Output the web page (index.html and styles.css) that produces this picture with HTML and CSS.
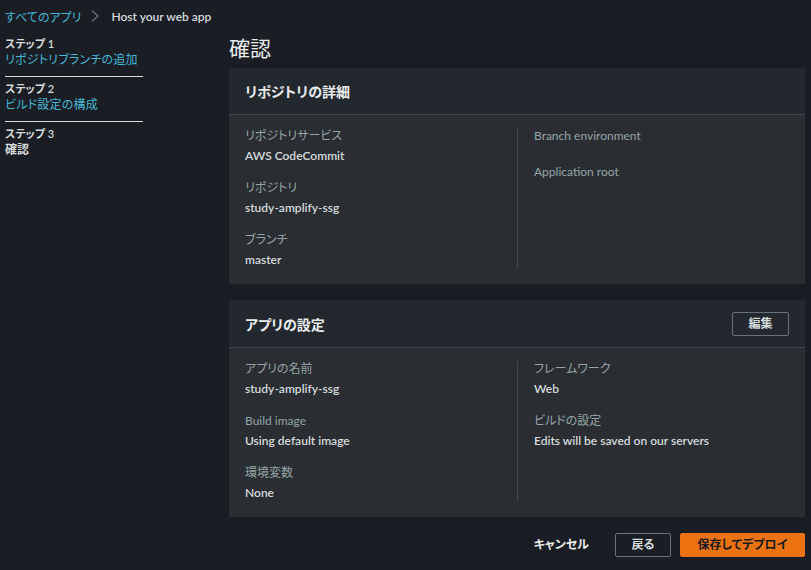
FILE: index.html
```html
<!DOCTYPE html>
<html lang="ja">
<head>
<meta charset="utf-8">
<title>確認</title>
<link rel="stylesheet" href="styles.css">
</head>
<body>
<nav class="breadcrumb">
  <a class="crumb-link" href="#">すべてのアプリ</a>
  <svg class="chev" width="10" height="14" viewBox="0 0 10 14"><path d="M2 1.5 L8 7 L2 12.5" fill="none" stroke="#687078" stroke-width="1.4"/></svg>
  <span class="crumb-current">Host your web app</span>
</nav>
<div class="layout">
  <aside class="steps">
    <div class="step">
      <div class="step-num">ステップ 1</div>
      <a class="step-link" href="#">リポジトリブランチの追加</a>
    </div>
    <div class="step">
      <div class="step-num">ステップ 2</div>
      <a class="step-link" href="#">ビルド設定の構成</a>
    </div>
    <div class="step step-last">
      <div class="step-num">ステップ 3</div>
      <div class="step-current">確認</div>
    </div>
  </aside>
  <main class="main">
    <h1 class="page-title">確認</h1>
    <section class="panel">
      <header class="panel-head">
        <h2 class="panel-title">リポジトリの詳細</h2>
      </header>
      <div class="panel-body">
        <div class="col">
          <div class="field"><div class="label">リポジトリサービス</div><div class="value">AWS CodeCommit</div></div>
          <div class="field"><div class="label">リポジトリ</div><div class="value">study-amplify-ssg</div></div>
          <div class="field"><div class="label">ブランチ</div><div class="value">master</div></div>
        </div>
        <div class="col col-right">
          <div class="field"><div class="label">Branch environment</div><div class="value"></div></div>
          <div class="field"><div class="label">Application root</div><div class="value"></div></div>
        </div>
      </div>
    </section>
    <section class="panel panel-settings">
      <header class="panel-head">
        <h2 class="panel-title">アプリの設定</h2>
        <button class="btn btn-normal btn-edit">編集</button>
      </header>
      <div class="panel-body">
        <div class="col">
          <div class="field"><div class="label">アプリの名前</div><div class="value">study-amplify-ssg</div></div>
          <div class="field"><div class="label">Build image</div><div class="value">Using default image</div></div>
          <div class="field"><div class="label">環境変数</div><div class="value">None</div></div>
        </div>
        <div class="col col-right">
          <div class="field"><div class="label">フレームワーク</div><div class="value">Web</div></div>
          <div class="field"><div class="label">ビルドの設定</div><div class="value">Edits will be saved on our servers</div></div>
        </div>
      </div>
    </section>
    <div class="actions">
      <button class="btn btn-link">キャンセル</button>
      <button class="btn btn-normal btn-back">戻る</button>
      <button class="btn btn-primary">保存してデプロイ</button>
    </div>
  </main>
</div>
</body>
</html>
```
FILE: styles.css
```css
* { box-sizing: border-box; }
html, body {
  margin: 0;
  padding: 0;
  background: #1a1d24;
  color: #d5dbdb;
  font-family: Lato, "Noto Sans CJK JP", sans-serif;
  font-feature-settings: "palt";
  font-size: 12px;
}
a { text-decoration: none; }

.breadcrumb {
  display: flex;
  align-items: center;
  height: 33px;
  padding-left: 5px;
  padding-bottom: 1px;
}
.crumb-link { color: #44b9d6; font-size: 12px; }
.chev { margin: 0 11px 0 9px; }
.crumb-current { color: #d5dbdb; font-weight: 600; font-size: 12px; }

.layout {
  display: flex;
  align-items: flex-start;
}
.steps {
  width: 138px;
  margin-left: 5px;
  margin-top: 3px;
}
.step {
  padding-bottom: 8px;
  border-bottom: 1px solid #d5dbdb;
  margin-bottom: 4px;
}
.step-last { border-bottom: none; }
.step-num {
  font-size: 11px;
  line-height: 16px;
  color: #d5dbdb;
  font-weight: 600;
}
.step-link {
  display: block;
  color: #44b9d6;
  font-size: 12px;
  line-height: 16px;
  white-space: nowrap;
  letter-spacing: 0.2px;
}
.step-current {
  font-size: 12px;
  line-height: 16px;
  font-weight: 700;
  color: #d5dbdb;
}

.main {
  width: 576px;
  margin-left: 86px;
}
.page-title {
  margin: 0;
  height: 35px;
  font-size: 21px;
  font-weight: 400;
  line-height: 30px;
  color: #eaeded;
}
.panel {
  background: #2a2e33;
  margin-bottom: 16px;
}
.panel-head {
  display: flex;
  align-items: center;
  justify-content: space-between;
  height: 47px;
  padding: 0 16px;
  background: #23272e;
  border-bottom: 1px solid #414750;
}
.panel-settings .panel-head { height: 48px; }
.panel-title {
  margin: 0;
  font-size: 14px;
  font-weight: 700;
  color: #eaeded;
}
.panel-body {
  display: grid;
  grid-template-columns: 1fr 1fr;
  padding: 13px 16px 16px;
}
.col {
  display: flex;
  flex-direction: column;
  gap: 16px;
}
.col-right {
  border-left: 1px solid #414750;
  padding-left: 16px;
}
.field {
  display: flex;
  flex-direction: column;
  gap: 4px;
}
.label {
  font-size: 12px;
  line-height: 16px;
  color: #95a5a6;
}
.value {
  font-size: 12px;
  line-height: 16px;
  font-weight: 600;
  color: #d5dbdb;
}

.btn {
  font-family: inherit;
  font-feature-settings: "palt";
  font-size: 12px;
  font-weight: 700;
  height: 24px;
  padding: 0;
  cursor: pointer;
  line-height: 22px;
}
.btn-normal {
  background: transparent;
  color: #d5dbdb;
  border: 1px solid #687078;
  border-radius: 2px;
}
.btn-edit { width: 57px; }
.btn-link {
  background: transparent;
  border: 1px solid transparent;
  color: #eaeded;
  padding: 0 20px;
}
.btn-back { width: 56px; margin-left: 5px; }
.btn-primary {
  background: #ec7211;
  border: 1px solid #ec7211;
  border-radius: 2px;
  color: #16191f;
  width: 125px;
  margin-left: 9px;
}
.actions {
  display: flex;
  justify-content: flex-end;
  align-items: center;
  margin-top: 16px;
}
.panel + .actions { margin-top: 0; }
```
